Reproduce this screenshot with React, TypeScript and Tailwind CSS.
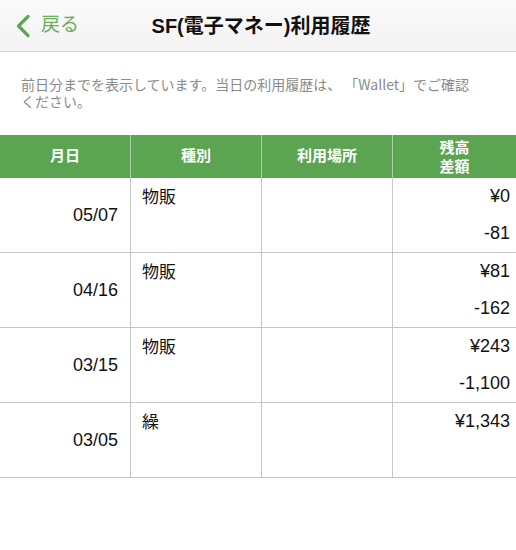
import React from "react";

const rows = [
  { date: "05/07", kind: "物販", place: "", balance: "¥0", diff: "-81" },
  { date: "04/16", kind: "物販", place: "", balance: "¥81", diff: "-162" },
  { date: "03/15", kind: "物販", place: "", balance: "¥243", diff: "-1,100" },
  { date: "03/05", kind: "繰", place: "", balance: "¥1,343", diff: "" },
];

export default function App() {
  return (
    <div
      className="w-[516px] h-[550px] bg-white overflow-hidden text-[#111]"
      style={{ fontFamily: '"Liberation Sans", "Noto Sans CJK JP", sans-serif' }}
    >
      <div className="h-[52px] bg-gradient-to-b from-[#fafafa] to-[#f3f3f3] border-b border-[#d6d6d6] flex items-center relative">
        <div className="flex items-center pl-[14px]">
          <svg width="20" height="24" viewBox="0 0 20 24" fill="none">
            <path d="M14 2.5 L4.5 12 L14 21.5" stroke="#5ea655" strokeWidth="3.2" strokeLinecap="round" strokeLinejoin="round" />
          </svg>
          <span className="ml-[7px] text-[19px] text-[#6aae60]">戻る</span>
        </div>
        <div className="absolute inset-0 flex items-center justify-center pl-[6px]">
          <span className="text-[20px] font-bold text-[#111]">SF(電子マネー)利用履歴</span>
        </div>
      </div>

      <div
        className="px-[21px] pt-[24px] text-[14px] leading-[17px] text-[#8a8a8a]"
        style={{ fontFamily: '"Noto Sans CJK JP", "Liberation Sans", sans-serif' }}
      >
        前日分までを表示しています。当日の利用履歴は、 「Wallet」でご確認
        <br />
        ください。
      </div>

      <div className="mt-[25px]">
        <div className="grid grid-cols-[131px_131px_131px_1fr] h-[43px] bg-[#5ba552] text-white text-[15px] font-semibold">
          <div className="flex items-center justify-center border-r border-[#a9cfa4]">月日</div>
          <div className="flex items-center justify-center border-r border-[#a9cfa4]">種別</div>
          <div className="flex items-center justify-center border-r border-[#a9cfa4]">利用場所</div>
          <div className="flex flex-col items-center justify-center leading-[19px]">
            <span>残高</span>
            <span>差額</span>
          </div>
        </div>
        {rows.map((r) => (
          <div
            key={r.date}
            className="grid grid-cols-[131px_131px_131px_1fr] h-[75px] border-b border-[#c6c6c6] text-[17px]"
          >
            <div className="flex items-center justify-end pr-[12px] border-r border-[#c6c6c6] text-[18px]">{r.date}</div>
            <div className="pl-[11px] pt-[7px] border-r border-[#c6c6c6]">{r.kind}</div>
            <div className="border-r border-[#c6c6c6]">{r.place}</div>
            <div className="flex flex-col items-end pr-[6px] pt-[8px] leading-[20px] gap-[17px] text-[18px]">
              <span>{r.balance}</span>
              <span>{r.diff}</span>
            </div>
          </div>
        ))}
      </div>
    </div>
  );
}
